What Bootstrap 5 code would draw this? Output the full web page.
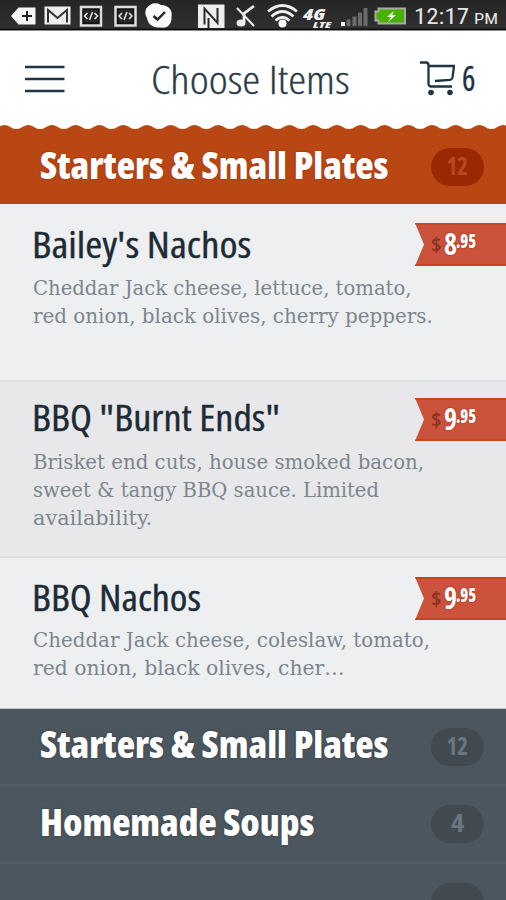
<!DOCTYPE html>
<html lang="en">
<head>
<meta charset="utf-8">
<meta name="viewport" content="width=device-width, initial-scale=1">
<title>Choose Items</title>
<link href="https://cdn.jsdelivr.net/npm/bootstrap@5.3.0/dist/css/bootstrap.min.css" rel="stylesheet">
<style>
  body { width: 506px; height: 900px; overflow: hidden; background: #4c565e; font-family: "Open Sans", "Noto Sans", sans-serif; font-stretch: 75%; }
  .fit { display: inline-block; white-space: nowrap; transform-origin: 0 50%; }
  .status { height: 31px; background: linear-gradient(#252525, #303030 28px, #111 29px, #111 30px, #8b898a 30px); }
  .topbar { height: 94px; background: #fff; color: #1f3344; }
  .topbar .burger { margin: 1px 0 0 25px; width: 126px; }
  .screen-title { width: 269px; font-size: 39px; font-weight: 300; line-height: 40px; color: #2a3b49; padding-top: 1px; -webkit-text-stroke: .3px #2a3b49; }
  .count { width: 14px; font-size: 34px; line-height: 40px; font-weight: 400; margin-left: 7px; -webkit-text-stroke: .3px #1f3344; }
  .section { height: 77px; padding-left: 40px; border-bottom: 2px solid #525d65; background: #4c565e; color: #fff; }
  .section.tall { height: 78px; }
  .section h2 { width: 391px; margin: 0; padding-bottom: 5px; font-size: 37px; font-weight: 800; line-height: 40px; text-shadow: 0 0 2px rgba(20,30,40,.6); }
  .section .pill { width: 53px; height: 38px; border-radius: 19px; background: #404a50; color: #6b7780; font-size: 24px; font-weight: 700; line-height: 36px; text-align: center; }
  .section.active-section { height: 75px; background: #b94713; border: 0; }
  .active-section h2 { padding-bottom: 3px; text-shadow: 0 0 2px rgba(150,20,0,.7); }
  .active-section .pill { background: #9a2803; color: #b64b20; }
  .dish { height: 178px; padding: 21px 0 0 33px; background: #edeff1; border-bottom: 2px solid #dcdee0; }
  .dish.alt { height: 176px; background: #e8e8ea; padding-top: 16px; }
  .dish.last { height: 151px; padding-top: 20px; border-bottom: 1px solid #c3c7ca; }
  .dish-text { width: 382px; }
  .dish h3 { margin: 0 0 10px -1px; font-size: 36px; font-weight: 500; line-height: 40px; color: #1c2b36; -webkit-text-stroke: .35px #1c2b36; }
  .dish.alt h3 { margin-bottom: 11px; }
  .dish.last h3 { margin-bottom: 9px; }
  .blurb { margin-left: -.5px; font-family: "DejaVu Serif Condensed", "DejaVu Serif", serif; font-size: 21px; line-height: 27.8px; color: #7c868f; }
  .blurb > div { height: 27.8px; }
  .ribbon { width: 91px; height: 43px; margin-top: -2px; padding-left: 16px; background: #cb523b; border-top: 2px solid #c8461e; border-bottom: 2px solid #c8461e; clip-path: polygon(0 0, 100% 0, 100% 100%, 0 100%, 9px 50%); color: #fff; line-height: 39px; font-weight: 700; }
  .alt .ribbon { margin-top: 0; }
  .last .ribbon { margin-top: -1px; }
  .ribbon .dollar { width: 12.5px; font-size: 20px; color: #8c3425; }
  .ribbon .whole { width: 12.5px; font-size: 30px; margin-top: -1px; text-shadow: 0 0 2px #a32611; }
  .ribbon .cents { font-size: 20px; font-weight: 800; margin-top: -4px; text-shadow: 0 0 2px #a32611; }
</style>
</head>
<body>
<header>
  <div class="status d-flex">
    <svg width="506" height="30" viewBox="0 0 506 30" fill="none">
      <path d="M11 16 18.500 7.500H35.500V24.500H18.500Z" fill="#f5f5f5"/><path d="M22 16h10M27 11v10" stroke="#222" stroke-width="2"/>
      <path d="M44.500 6.500h26v18h-26z" fill="#eee"/><path d="M48 22.500V10L57.500 18 67 10V22.500" stroke="#333" stroke-width="2"/>
      <g id="code"><path d="M81 7h20v18.500H81z" fill="#111" stroke="#ddd" stroke-width="2.500"/><path d="M84 10h14v12.500H84z" fill="#262626"/><path d="m87.500 13-3 3 3 3m7-6 3 3-3 3m-2-7-3 8" stroke="#ddd" stroke-width="1.600"/></g>
      <use href="#code" x="34.500"/>
      <path d="M146 9C150 3 156 2 161 5 169 5 173 11 171.500 17 172 24 167 29 161 27.500 154 28 148 25 147 18 145 15 145 12 146 9Z" fill="#fafafa"/><path d="m153.500 16 4 3.500 7.500-7.500" stroke="#222" stroke-width="2.400"/>
      <path d="M198 4.500h26.500V28H198z" fill="#eee"/><path d="M204.500 24.500V8.500L217.500 23V8M208.500 28V18" stroke="#292929" stroke-width="2"/>
      <path d="M237 8l17 18" stroke="#eee" stroke-width="2"/><path d="M254 6 244 13.500V22" stroke="#eee" stroke-width="2.800"/><ellipse cx="241" cy="23" rx="4.500" ry="3.500" fill="#eee"/>
      <path d="M268 11.500Q282.500-.500 297 11.500M271.500 16.500Q282.500 6.500 293.500 16.500M275.500 20.500Q282.500 14 289.500 20.500" stroke="#eee" stroke-width="2.800"/><circle cx="282.500" cy="23.500" r="4" fill="#fff"/>
      <g fill="#f2f2f2" font-family="Open Sans, sans-serif" font-style="italic" font-weight="800"><text x="303" y="20" font-size="15" textLength="22" lengthAdjust="spacingAndGlyphs">4G</text><text x="313" y="28" font-size="8.500" textLength="18" lengthAdjust="spacingAndGlyphs">LTE</text></g>
      <path d="M341 22h4v4h-4z" fill="#fff"/><path d="M346.500 19.500h4V26h-4zm6-3h4V26h-4zm5.500-4h4V26h-4zm5.500-4.500h4V26h-4z" fill="#6b6b6b"/>
      <path d="M378.500 8.500h26.500v15H378.500v-3h-3v-9h3z" fill="#45b200" stroke="#aaa" stroke-width="2"/><path d="m394 11-7 6h4l-3 5 8-7h-4z" fill="#fff"/>
      <g fill="#e6e6e6" font-family="Roboto, sans-serif"><text x="414" y="24" font-size="22.500" textLength="55" lengthAdjust="spacingAndGlyphs">12:17</text><text x="474" y="24" font-size="15" textLength="24" lengthAdjust="spacingAndGlyphs">PM</text></g>
    </svg>
  </div>
  <div class="topbar d-flex align-items-center">
    <div class="burger d-flex"><svg width="40" height="30" viewBox="0 0 40 30"><path d="M0 3h39.500M0 15h39.500M0 27h39.500" stroke="#1f3344" stroke-width="2.600"/></svg></div>
    <div class="screen-title"><span class="fit" data-w="199">Choose Items</span></div>
    <svg width="35" height="36" viewBox="0 0 35 36" fill="none" stroke="#1f3344" stroke-width="2.300"><path d="M0 2.500h6q2.500 0 2.500 3v18q0 3 3 3H32M8.500 6H34L32.500 17.500Q32 19.500 30 19.800L15 21"/><g fill="#1f3344" stroke="none"><circle cx="11" cy="32.500" r="2.800"/><circle cx="30" cy="32.500" r="2.800"/></g></svg>
    <div class="count"><span class="fit" data-w="13">6</span></div>
  </div>
</header>
<main>
  <svg class="d-block" width="506" height="4" viewBox="0 0 506 4">
    <defs><pattern id="scallop" x="-7.500" width="23.750" height="4" patternUnits="userSpaceOnUse"><path d="M0 4Q4 4 6.500 1.800 12 -1.600 17.500 1.800 20 4 23.750 4Z" fill="#b94713"/></pattern></defs>
    <path fill="#fff" d="M0 0h506v4H0z"/><path fill="url(#scallop)" d="M0 0h506v4H0z"/>
  </svg>
  <section class="section active-section d-flex align-items-center">
    <h2><span class="fit" data-w="348">Starters &amp; Small Plates</span></h2>
    <span class="pill"><span class="fit" data-w="22">12</span></span>
  </section>

  <article class="dish d-flex">
    <div class="dish-text">
      <h3><span class="fit" data-w="219">Bailey's Nachos</span></h3>
      <div class="blurb"><div><span class="fit" data-w="379">Cheddar Jack cheese, lettuce, tomato,</span></div><div><span class="fit" data-w="400">red onion, black olives, cherry peppers.</span></div></div>
    </div>
    <div class="ribbon d-flex"><span class="dollar"><span class="fit" data-w="10">$</span></span><span class="whole"><span class="fit" data-w="13">8</span></span><span class="cents"><span class="fit" data-w="20">.95</span></span></div>
  </article>
  <article class="dish alt d-flex">
    <div class="dish-text">
      <h3><span class="fit" data-w="248">BBQ "Burnt Ends"</span></h3>
      <div class="blurb"><div><span class="fit" data-w="391">Brisket end cuts, house smoked bacon,</span></div><div><span class="fit" data-w="346">sweet &amp; tangy BBQ sauce. Limited</span></div><div><span class="fit" data-w="119">availability.</span></div></div>
    </div>
    <div class="ribbon d-flex"><span class="dollar"><span class="fit" data-w="10">$</span></span><span class="whole"><span class="fit" data-w="13">9</span></span><span class="cents"><span class="fit" data-w="20">.95</span></span></div>
  </article>
  <article class="dish last d-flex">
    <div class="dish-text">
      <h3><span class="fit" data-w="169">BBQ Nachos</span></h3>
      <div class="blurb"><div><span class="fit" data-w="397">Cheddar Jack cheese, coleslaw, tomato,</span></div><div><span class="fit" data-w="312">red onion, black olives, cher…</span></div></div>
    </div>
    <div class="ribbon d-flex"><span class="dollar"><span class="fit" data-w="10">$</span></span><span class="whole"><span class="fit" data-w="13">9</span></span><span class="cents"><span class="fit" data-w="20">.95</span></span></div>
  </article>

  <section class="section d-flex align-items-center">
    <h2><span class="fit" data-w="348">Starters &amp; Small Plates</span></h2>
    <span class="pill"><span class="fit" data-w="22">12</span></span>
  </section>
  <section class="section tall d-flex align-items-center">
    <h2><span class="fit" data-w="274">Homemade Soups</span></h2>
    <span class="pill"><span class="fit" data-w="13">4</span></span>
  </section>
  <section class="section d-flex align-items-center">
    <h2></h2>
    <span class="pill"></span>
  </section>
</main>
<script src="https://cdn.jsdelivr.net/npm/bootstrap@5.3.0/dist/js/bootstrap.bundle.min.js"></script>
<script>
  // Condense each label horizontally to its design width.
  document.querySelectorAll('.fit').forEach(function (el) {
    var w = el.offsetWidth, target = parseFloat(el.dataset.w);
    if (el.parentElement.classList.contains('pill')) el.style.transformOrigin = '50% 50%';
    el.style.transform = 'scaleX(' + target / w + ')';
  });
</script>
</body>
</html>
